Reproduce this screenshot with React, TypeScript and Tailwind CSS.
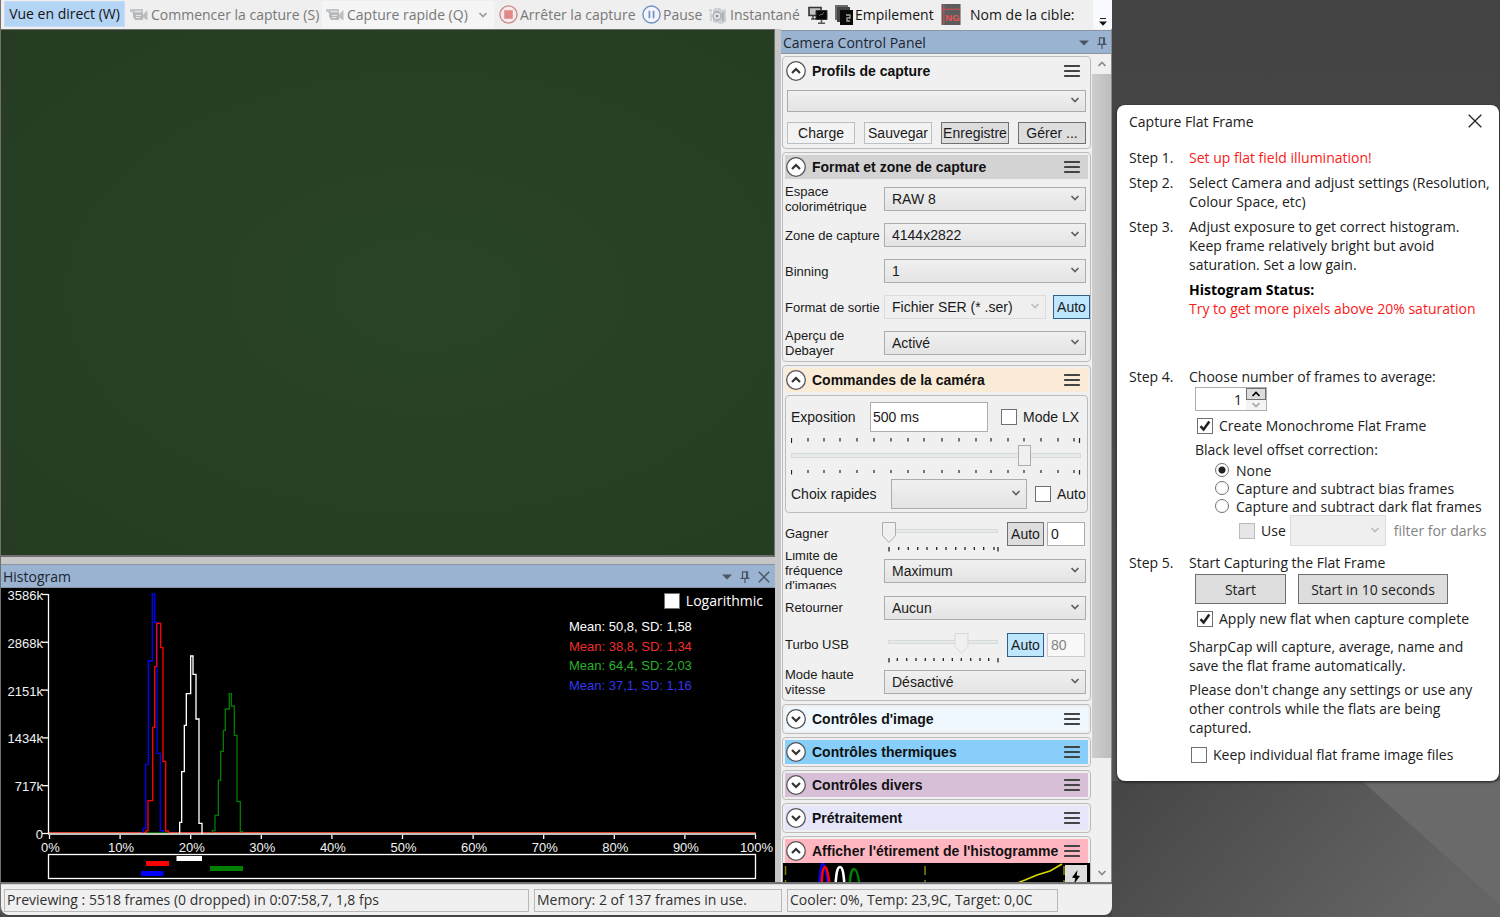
import type { ReactNode } from 'react';
import { useState } from 'react';
import clsx from 'clsx';

const uiFont = "font-['Open_Sans',sans-serif]";
const arial = "font-['Liberation_Sans',sans-serif]";

function Chevron({ className, up = false }: { className?: string; up?: boolean }) {
  return (
    <svg viewBox="0 0 10 6" className={clsx('h-[6px] w-[10px]', className)} fill="none">
      <path d={up ? 'M1.5 5 5 1.5 8.5 5' : 'M1.5 1 5 4.5 8.5 1'} stroke="currentColor" strokeWidth="1.7" />
    </svg>
  );
}

function PinIcon() {
  return (
    <svg viewBox="0 0 10 12" className="h-3 w-[10px]" fill="none" stroke="#4b5563" strokeWidth="1.2">
      <path d="M2.5 7V.8h5V7M.5 7.3h9M5 7.5V12M6.6 1v6" />
    </svg>
  );
}

function TitleBar({ title, closable = false }: { title: string; closable?: boolean }) {
  return (
    <div
      className={clsx(
        'flex h-[24px] shrink-0 items-center border-y border-[#8895a3] bg-[#9ab3d1] pt-[2px] pl-[2px] text-sm leading-5 text-[#1c2530]',
        closable ? 'pr-[5px]' : 'pr-1',
        uiFont,
      )}
    >
      <h2 className="flex-1">{title}</h2>
      <button type="button" aria-label="Menu" className="mr-[8px]">
        <svg viewBox="0 0 10 6" className="h-[6px] w-[10px]">
          <path d="M0 .5h10L5 5.5z" fill="#4b5563" />
        </svg>
      </button>
      <button type="button" aria-label="Pin">
        <PinIcon />
      </button>
      {closable && (
        <button type="button" aria-label="Close" className="ml-[8px]">
          <svg viewBox="0 0 12 12" className="h-3 w-3" stroke="#4b5563" strokeWidth="1.5">
            <path d="M.8.8l10.4 10.4M11.2.8.8 11.2" />
          </svg>
        </button>
      )}
    </div>
  );
}

interface SelectProps {
  label: string;
  value?: string;
  className?: string;
  disabled?: boolean;
}

function Select({ label, value = '', className, disabled }: SelectProps) {
  return (
    <div className={clsx('relative', className)}>
      <select
        aria-label={label}
        disabled={disabled}
        className={clsx(
          'block h-full w-full appearance-none border pl-[7px] text-sm text-[#1a1a1a] opacity-100',
          disabled
            ? 'border-[#dcdcdc] bg-[#efefef]'
            : 'border-[#acacac] bg-linear-to-b from-[#f0f0f0] to-[#e4e4e4]',
        )}
      >
        <option>{value}</option>
      </select>
      <Chevron
        className={clsx(
          'pointer-events-none absolute top-1/2 right-[6px] -translate-y-1',
          disabled ? 'text-[#bdbdbd]' : 'text-[#606060]',
        )}
      />
    </div>
  );
}

interface CheckProps {
  label: string;
  checked?: boolean;
  disabled?: boolean;
  className?: string;
}

function Check({ label, checked = false, disabled, className }: CheckProps) {
  const [on, setOn] = useState(checked);
  return (
    <label className={clsx('flex items-center gap-[6px] whitespace-nowrap', className)}>
      <span className="relative h-4 w-4 shrink-0">
        <input
          type="checkbox"
          checked={on}
          disabled={disabled}
          onChange={() => setOn(!on)}
          className={clsx(
            'block h-4 w-4 appearance-none border',
            disabled ? 'border-[#bcbcbc] bg-[#e6e6e6]' : 'border-[#707070] bg-white',
          )}
        />
        {on && (
          <svg viewBox="0 0 16 16" className="pointer-events-none absolute inset-0" fill="none">
            <path d="M3.5 8.2 6.6 11.6 12.3 3.6" stroke="#212121" strokeWidth="2.5" />
          </svg>
        )}
      </span>
      {label}
    </label>
  );
}

function AutoButton({ active, className }: { active?: boolean; className?: string }) {
  return (
    <button
      type="button"
      className={clsx(
        'h-[24px] w-[37px] shrink-0 border text-sm',
        active ? 'border-[#2c628b] bg-[#bee6fd]' : 'border-[#707070] bg-[#dddddd]',
        className,
      )}
    >
      Auto
    </button>
  );
}

interface SectionProps {
  title: string;
  tint: string;
  open?: boolean;
  children?: ReactNode;
}

function Section({ title, tint, open = false, children }: SectionProps) {
  return (
    <section className={clsx('shrink-0 rounded-[4px] border border-[#bcbcbc] px-[2px] pt-[2px]', !open && 'pb-[2px]')}>
      <header className={clsx('flex h-6 items-center pr-2', tint)}>
        <button type="button" aria-label={title} aria-expanded={open} className="ml-px">
          <svg viewBox="0 0 20 20" className="h-5 w-5" fill="none">
            <circle cx="10" cy="10" r="9.3" fill="#fff" stroke="#555" strokeWidth="1.3" />
            <path d={open ? 'M6 12l4-4 4 4' : 'M6 8l4 4 4-4'} stroke="#333" strokeWidth="2.2" />
          </svg>
        </button>
        <h3 className="ml-[6px] flex-1 text-sm font-bold whitespace-nowrap text-[#111]">{title}</h3>
        <button type="button" aria-label={`Options ${title}`}>
          <svg viewBox="0 0 16 12" className="h-3 w-4" stroke="#444" strokeWidth="2.2" strokeLinecap="round">
            <path d="M1 1h14M1 6h14M1 11h14" />
          </svg>
        </button>
      </header>
      {children}
    </section>
  );
}

function Row({ label, tall, children }: { label: string; tall?: boolean; children: ReactNode }) {
  return (
    <div className={clsx('grid grid-cols-[99px_1fr] items-center pr-[2px]', tall ? 'h-[37px]' : 'h-9')}>
      <div className="flex h-full items-center overflow-hidden text-[13px] leading-[15px]">
        <span className="max-w-[98px]">{label}</span>
      </div>
      {children}
    </div>
  );
}

interface SliderProps {
  label: string;
  position: number;
  value: number;
  ticks: number[];
  disabled?: boolean;
}

function SmallSlider({ label, position, value, ticks, disabled }: SliderProps) {
  return (
    <div className="relative h-[30px] w-[118px] shrink-0">
      <svg viewBox="0 0 118 30" className="h-[30px] w-[118px]">
        <rect x="6.5" y="7.5" width="109" height="3" fill="#e7eaea" stroke="#d6dada" />
        <path
          d={`M${position - 6.5} .5h13v13l-6.5 7-6.5-7z`}
          fill="#f0f0f0"
          stroke={disabled ? '#d9d9d9' : '#acacac'}
        />
        {ticks.map((x, i) => (
          <path
            key={x}
            d={`M${x} 25v${i === 0 || i === ticks.length - 1 ? 4.5 : 3}`}
            stroke="#222"
            strokeWidth="1.3"
          />
        ))}
      </svg>
      <input
        type="range"
        aria-label={label}
        defaultValue={value}
        disabled={disabled}
        className="absolute inset-0 w-full opacity-0"
      />
    </div>
  );
}

const exposureTicks = [0.5, 17, 33, 49, 66, 83, 100, 117, 133, 151, 168, 185, 200, 217, 233, 250, 267, 283, 288.5];
const gainTicks = [7, 16.7, 26.3, 35.7, 45, 54.7, 64, 73.7, 83, 92.3, 101.7, 112, 116];
const usbTicks = [7, 15.3, 24.7, 34, 43.3, 52, 61.3, 70.3, 79.3, 88.7, 98, 106.7, 116];

function ExposureSlider() {
  return (
    <div className="relative mt-[3px] h-[40px]">
      <svg viewBox="0 0 290 40" className="h-[40px] w-[290px]">
        {exposureTicks.map((x, i) => {
          const long = i === 0 || i === exposureTicks.length - 1;
          return (
            <path key={x} d={`M${x} 3v${long ? 5 : 3.5}M${x} 35v${long ? 4.5 : 3}`} stroke="#222" strokeWidth="1.2" />
          );
        })}
        <rect x=".5" y="18.5" width="289" height="4" fill="#e7eaea" stroke="#d6dada" />
        <rect x="227.5" y="10.5" width="12" height="20" fill="#f0f0f0" stroke="#acacac" />
      </svg>
      <input type="range" aria-label="Exposition" defaultValue={80} className="absolute inset-0 w-full opacity-0" />
    </div>
  );
}

function CaptureProfiles() {
  const button = 'h-[22px] flex-1 basis-0 border text-sm leading-5 whitespace-nowrap text-[#1a1a1a]';
  return (
    <div className="px-[2px] pt-[7px] pb-1">
      <Select label="Profil" className="h-[22px]" />
      <div className="mt-[10px] flex gap-[9px]">
        <button type="button" className={clsx(button, 'border-[#b9c0c4] bg-[#f3f3f3]')}>Charge</button>
        <button type="button" className={clsx(button, 'border-[#b9c0c4] bg-[#f3f3f3]')}>Sauvegar</button>
        <button type="button" className={clsx(button, 'border-[#707070] bg-[#dddddd]')}>Enregistre</button>
        <button type="button" className={clsx(button, 'border-[#707070] bg-[#dddddd]')}>Gérer ...</button>
      </div>
    </div>
  );
}

function CameraControls() {
  return (
    <>
      <div className="mt-[3px] mb-[2px] h-[118px] overflow-hidden rounded-[4px] border border-[#bcbcbc] px-[5px] pt-[6px] text-sm">
        <div className="flex h-[30px] items-center">
          <label htmlFor="exposure" className="w-[79px]">Exposition</label>
          <input
            id="exposure"
            defaultValue="500 ms"
            className="h-[30px] w-[118px] border border-[#abadb3] bg-white px-[2px]"
          />
          <Check label="Mode LX" className="ml-[13px]" />
        </div>
        <ExposureSlider />
        <div className="mt-[4px] flex h-[30px] items-center">
          <span className="w-[100px] shrink-0">Choix rapides</span>
          <Select label="Choix rapides" className="h-[30px] w-[136px] shrink-0" />
          <Check label="Auto" className="ml-[8px] shrink-0" />
        </div>
      </div>
      <Row label="Gagner" tall>
        <div className="-ml-[2px] flex h-full items-start pt-[7px]">
          <SmallSlider label="Gagner" position={7} value={0} ticks={gainTicks} />
          <AutoButton className="ml-[7px]" />
          <input
            aria-label="Valeur du gain"
            defaultValue="0"
            className="ml-[3px] h-[24px] w-[38px] border border-[#abadb3] bg-white px-[3px] text-sm"
          />
        </div>
      </Row>
      <Row label="Limite de fréquence d'images" tall>
        <Select label="Limite de fréquence d'images" value="Maximum" className="h-[24px]" />
      </Row>
      <Row label="Retourner" tall>
        <Select label="Retourner" value="Aucun" className="h-[24px]" />
      </Row>
      <Row label="Turbo USB" tall>
        <div className="-ml-[2px] flex h-full items-start pt-[7px]">
          <SmallSlider label="Turbo USB" position={79.5} value={80} ticks={usbTicks} disabled />
          <AutoButton active className="ml-[7px]" />
          <input
            aria-label="Valeur Turbo USB"
            defaultValue="80"
            disabled
            className="ml-[3px] h-[24px] w-[38px] border border-[#c9cbd0] bg-[#f8f8f8] px-[3px] text-sm text-[#838383]"
          />
        </div>
      </Row>
      <Row label="Mode haute vitesse" tall>
        <Select label="Mode haute vitesse" value="Désactivé" className="h-[24px]" />
      </Row>
    </>
  );
}

function StretchPreview() {
  return (
    <div className="-mx-[2px] flex h-[120px] bg-black pr-[2px]">
      <svg viewBox="0 0 282 120" className="h-[120px] w-[282px]" fill="none">
        <path d="M2.5 3v120M142 3v120M281 3v120" stroke="#8a8600" strokeWidth="1.5" strokeDasharray="9 5" />
        <path d="M36 30C37 8 38 1 40 1s4 9 5 29" stroke="#00f" strokeWidth="2.5" />
        <path d="M38 30C39 10 40 4 42 4s4 9 5 26" stroke="red" strokeWidth="2.5" />
        <path d="M52 30c1-20 2-26 5-26s4 8 5 26" stroke="#fff" strokeWidth="2.5" />
        <path d="M66 30c1-16 2-24 5-24s5 8 6 24" stroke="green" strokeWidth="2.5" />
        <path d="M229 22l13-5 12-5 13-4 12-7" stroke="#d8d800" strokeWidth="1.5" />
      </svg>
      <button type="button" aria-label="Auto" className="mt-[2px] flex h-[24px] w-[22px] items-center justify-center bg-[#dddddd]">
        <svg viewBox="0 0 10 14" className="h-[14px] w-[10px]">
          <path d="M6.5 0 1 7.5l3.3.8L3 14l6-8-3.3-.6z" fill="#000" />
        </svg>
      </button>
    </div>
  );
}

function ControlPanel() {
  return (
    <aside className={clsx('flex w-[331px] shrink-0 flex-col border-r border-[#8a8a8a] bg-[#f0f0f0] pt-px text-[#1a1a1a]', arial)}>
      <TitleBar title="Camera Control Panel" />
      <div className="flex min-h-0 flex-1">
        <div className="flex min-w-0 flex-1 flex-col gap-[3px] overflow-hidden pt-[2px] pl-px">
          <Section title="Profils de capture" tint="bg-[#f0f0f0]" open>
            <CaptureProfiles />
          </Section>
          <Section title="Format et zone de capture" tint="bg-[#d3d3d3]" open>
            <div className="pt-[2px]">
              <Row label="Espace colorimétrique">
                <Select label="Espace colorimétrique" value="RAW 8" className="h-[24px]" />
              </Row>
              <Row label="Zone de capture">
                <Select label="Zone de capture" value="4144x2822" className="h-[24px]" />
              </Row>
              <Row label="Binning">
                <Select label="Binning" value="1" className="h-[24px]" />
              </Row>
              <Row label="Format de sortie">
                <div className="-mr-[4px] flex gap-[7px]">
                  <Select label="Format de sortie" value="Fichier SER (* .ser)" className="h-[24px] flex-1" disabled />
                  <AutoButton active />
                </div>
              </Row>
              <Row label="Aperçu de Debayer">
                <Select label="Aperçu de Debayer" value="Activé" className="h-[24px]" />
              </Row>
            </div>
          </Section>
          <Section title="Commandes de la caméra" tint="bg-[#faebd7]" open>
            <CameraControls />
          </Section>
          <Section title="Contrôles d'image" tint="bg-[#f0f8ff]" />
          <Section title="Contrôles thermiques" tint="bg-[#87cefa]" />
          <Section title="Contrôles divers" tint="bg-[#d8bfd8]" />
          <Section title="Prétraitement" tint="bg-[#e6e6fa]" />
          <Section title="Afficher l'étirement de l'histogramme" tint="bg-[#ffb6c1]" open>
            <StretchPreview />
          </Section>
        </div>
        <div className="ml-px flex w-[19px] flex-col items-center text-[#8a8a8a]">
          <div className="flex h-[20px] items-center">
            <Chevron up />
          </div>
          <div className="w-full flex-1 bg-linear-to-r from-[#cdcdcd] to-[#bdbdbd]" />
          <div className="flex h-[124px] items-end pb-[6px]">
            <Chevron />
          </div>
        </div>
      </div>
    </aside>
  );
}

const stats = [
  { text: 'Mean: 50,8, SD: 1,58', fill: '#ffffff' },
  { text: 'Mean: 38,8, SD: 1,34', fill: '#ee2e2e' },
  { text: 'Mean: 64,4, SD: 2,03', fill: '#2bb02b' },
  { text: 'Mean: 37,1, SD: 1,16', fill: '#3535ee' },
];

const yLabels = ['3586k', '2868k', '2151k', '1434k', '717k', '0'];
const xLabels = ['0%', '10%', '20%', '30%', '40%', '50%', '60%', '70%', '80%', '90%', '100%'];

function HistogramChart() {
  return (
    <svg viewBox="1 0 774 294" className={clsx('h-full w-full', arial)} fontSize="13" fill="#f2f2f2">
      {/* traces are plotted on a three times finer grid */}
      <g transform="translate(0 -38) scale(.33333)" fill="none" strokeWidth="4">
        <path d="M147 848H2267" stroke="#d8442c" />
        <path
          d="M429 848V835h8V643h8V333h12V132h7V217h7V610h10V842h9v6"
          stroke="#0000ff"
        />
        <path
          d="M438 848v-6h6V752h14V532h6V350h6V220h12v73h7V634h8V843h8v5"
          stroke="#ff0000"
        />
        <path d="M637 848v-6h8V796h10V691h7V604h8V541h6V477h12V431h6v37h9v88h8V755h10v90h8" stroke="#007a00" />
        <path d="M441 848h62" stroke="#006400" />
        <path d="M539 850V817h6V665h8V526h6V431h13V318h7v55h9V507h9V820h9v32" stroke="#ffffff" />
      </g>
      <g stroke="#ffffff" strokeWidth="1.3" fill="none">
        <path d="M48.5 6v240" />
        <path d="M48 246h708" strokeWidth="1.6" />
        {yLabels.map((label, i) => (
          <path key={label} d={`M42 ${6.5 + i * 47.8}h6`} />
        ))}
        {xLabels.map((label, i) => (
          <path key={label} d={`M${49.5 + i * 70.6} 247v4`} />
        ))}
        <rect x="48.5" y="266.5" width="707" height="24" />
      </g>
      {yLabels.map((label, i) => (
        <text key={label} x="43" y={12 + i * 47.8} textAnchor="end">
          {label}
        </text>
      ))}
      {xLabels.map((label, i) => (
        <text key={label} x={50.5 + i * 70.6} y="264" textAnchor="middle">
          {label}
        </text>
      ))}
      {stats.map(({ text, fill }, i) => (
        <text key={text} x="569" y={43 + i * 19.7} fill={fill}>
          {text}
        </text>
      ))}
      <rect x="176.5" y="268" width="25.5" height="5" fill="#fff" />
      <rect x="146" y="273" width="23" height="5" fill="#f00" />
      <rect x="210" y="278" width="33" height="5" fill="#008000" />
      <rect x="141" y="283" width="22.5" height="5" fill="#00f" />
    </svg>
  );
}

function CamcorderIcon() {
  return (
    <svg viewBox="0 0 18 14" className="h-[14px] w-[18px] shrink-0">
      <path d="M0 1h3v3H0z" fill="#c6c8ca" />
      <path d="M2 1h11v4H2z" fill="#c3c6c8" />
      <path d="M3 5h10v7H5L3 9z" fill="#b6b9bc" />
      <path d="M5 3h6v1H5zM6 7h5v1H6zM6 9h4v1H6z" fill="#e6e6e6" />
      <path d="M13 6.5 17.5 2v10.500L13 9.5z" fill="#bcbfc2" />
    </svg>
  );
}

function Toolbar() {
  const item = 'flex items-center whitespace-nowrap';
  return (
    <header className={clsx('flex h-[29px] shrink-0 items-center bg-[#efefef] pl-[3px] text-sm text-[#787878]', uiFont)}>
      <button type="button" className={clsx(item, 'mb-px h-[26px] w-[121px] justify-center border border-[#c5dcf2] bg-[#b3d4f4] text-[#151515]')}>
        Vue en direct (W)
      </button>
      <button type="button" className={clsx(item, 'ml-[5px] w-[192px] gap-[3px]')}>
        <CamcorderIcon />
        Commencer la capture (S)
      </button>
      <div className="flex h-[28px] w-[172px] items-center bg-[#f5f5f5] pr-[6px] pl-1">
        <button type="button" className={clsx(item, 'flex-1 gap-[3px]')}>
          <CamcorderIcon />
          Capture rapide (Q)
        </button>
        <button type="button" aria-label="Plus d'options de capture">
          <Chevron className="text-[#9a9a9a]" />
        </button>
      </div>
      <button type="button" className={clsx(item, 'ml-[5px] w-[143px] gap-[2px]')}>
        <svg viewBox="0 0 20 20" className="h-[19px] w-[19px] shrink-0">
          <circle cx="10" cy="10" r="9" fill="#f6eaea" stroke="#c9898b" strokeWidth="1.4" />
          <path d="M5.5 5.5h9v9h-9z" fill="#e2878a" />
        </svg>
        Arrêter la capture
      </button>
      <button type="button" className={clsx(item, 'w-[67px] gap-[2px]')}>
        <svg viewBox="0 0 20 20" className="h-[19px] w-[19px] shrink-0">
          <circle cx="10" cy="10" r="9" fill="#f4f6fb" stroke="#7390c4" strokeWidth="1.5" />
          <path d="M7.8 6v8M12.2 6v8" stroke="#7390c4" strokeWidth="1.8" />
        </svg>
        Pause
      </button>
      <button type="button" className={clsx(item, 'w-[99px] gap-[3px]')}>
        <svg viewBox="0 0 18 18" className="h-[18px] w-[18px] shrink-0">
          <path d="M0 3h3v3H0zM1 7h2v8H1z" fill="#d0d2d4" />
          <path d="M4 4l2-2h5l2 2 4-1v13l-5 2-8-2z" fill="#cdcfd0" />
          <circle cx="8" cy="10" r="4" fill="#e9e9e9" stroke="#a4a8ac" strokeWidth="1.3" />
          <circle cx="8" cy="10" r="1.6" fill="#8d9baa" />
          <path d="M14 6v9" stroke="#8f8f8f" />
        </svg>
        Instantané
      </button>
      <button type="button" aria-label="Écrans" className="w-[27px] shrink-0">
        <svg viewBox="0 0 20 20" className="h-[20px] w-[20px]" fill="none">
          <path d="M1 2.5h12v8H1z" fill="#c4c4c4" stroke="#333" strokeWidth="1.6" />
          <path d="M5 11v3h3M3 14h5" stroke="#444" strokeWidth="1.5" />
          <path d="M8 5.5h11v9H8z" fill="#080808" stroke="#333" />
          <path d="M11 11l2-2 1 1 2-3" stroke="#777" strokeWidth=".8" />
          <path d="M13.5 15v3M10 18.3h7" stroke="#555" strokeWidth="1.5" />
        </svg>
      </button>
      <button type="button" className={clsx(item, 'w-[106px] shrink-0 gap-px text-[#151515]')}>
        <svg viewBox="0 0 19 20" className="h-[20px] w-[19px] shrink-0">
          <path d="M0 0h13v15H0z" fill="#6c6c6c" />
          <path d="M2 2h13v15H2z" fill="#454545" />
          <path d="M5 5h13v15H5z" fill="#0a0a0a" />
          <path d="M11 10h4v3h-3v3h3" fill="none" stroke="#a5a5a5" strokeWidth="1.3" />
        </svg>
        Empilement
      </button>
      <button type="button" aria-label="Annotation" className="mr-[9px] shrink-0">
        <svg viewBox="0 0 20 22" className="h-[21px] w-[20px]">
          <path d="M0 0h20v22H0z" fill="#5c5c5c" />
          <path d="M2.5 0v22M0 5.5h20" stroke="#dc4f52" strokeWidth="1" />
          <text x="4" y="18" fontSize="10" fill="#ef5558" fontWeight="700" className={arial}>
            NG
          </text>
        </svg>
      </button>
      <span className="flex-1 whitespace-nowrap text-[#151515]">Nom de la cible:</span>
      <button type="button" aria-label="Plus d'outils" className="flex h-full w-[19px] items-end justify-center bg-[#f8fafd] pb-[3px]">
        <svg viewBox="0 0 8 8" className="h-2 w-2">
          <path d="M1 .5h6" stroke="#222" />
          <path d="M0 3.5h8L4 7.8z" fill="#111" />
        </svg>
      </button>
    </header>
  );
}

function StatusBar() {
  const cell = 'flex h-[23px] items-center border border-[#b8b8b8] px-[2px] whitespace-nowrap';
  return (
    <footer className={clsx('flex h-[31px] shrink-0 items-center gap-[5px] rounded-b-lg border-t border-[#d8d8d8] bg-[#f0f0f0] pr-[54px] pl-[3px] text-sm text-[#303030]', uiFont)}>
      <div className={clsx(cell, 'flex-1')}>Previewing : 5518 frames (0 dropped) in 0:07:58,7, 1,8 fps</div>
      <div className={clsx(cell, 'w-[248px]')}>Memory: 2 of 137 frames in use.</div>
      <div className={clsx(cell, 'w-[271px]')}>Cooler: 0%, Temp: 23,9C, Target: 0,0C</div>
    </footer>
  );
}

function Radio({ label, checked }: { label: string; checked?: boolean }) {
  return (
    <label className="flex h-[18px] items-center gap-[7px]">
      <input
        type="radio"
        name="offset"
        defaultChecked={checked}
        className="h-[14px] w-[14px] shrink-0 appearance-none rounded-full border border-[#707070] bg-white checked:bg-[radial-gradient(circle,#212121_3px,#fff_4px)]"
      />
      {label}
    </label>
  );
}

function Step({ name, className, children }: { name: string; className?: string; children: ReactNode }) {
  return (
    <div className={clsx('grid grid-cols-[60px_1fr]', className)}>
      <span>{name}</span>
      <div>{children}</div>
    </div>
  );
}

function FlatFrameDialog() {
  return (
    <section
      role="dialog"
      aria-label="Capture Flat Frame"
      className={clsx('relative mt-[105px] mr-px ml-[5px] rounded-lg bg-white pb-[17px] pl-3 text-sm leading-[19px] text-[#202020] shadow-[0_1px_3px_#1a1a1a]', uiFont)}
    >
      <header className="flex h-[43px] items-start justify-between pt-[7px] pr-[17px]">
        <h2>Capture Flat Frame</h2>
        <button type="button" aria-label="Close" className="mt-[2px]">
          <svg viewBox="0 0 14 14" className="h-[14px] w-[14px]" stroke="#222" strokeWidth="1.3">
            <path d="M.7.7l12.6 12.6M13.3.7.7 13.3" />
          </svg>
        </button>
      </header>
      <Step name="Step 1.">
        <span className="text-[#fb1a1a]">Set up flat field illumination!</span>
      </Step>
      <Step name="Step 2." className="mt-[6px]">
        Select Camera and adjust settings (Resolution,
        <br />
        Colour Space, etc)
      </Step>
      <Step name="Step 3." className="mt-[6px]">
        Adjust exposure to get correct histogram.
        <br />
        Keep frame relatively bright but avoid
        <br />
        saturation. Set a low gain.
        <p className="mt-[6px] font-bold text-black">Histogram Status:</p>
        <p className="text-[#fb1a1a]">Try to get more pixels above 20% saturation</p>
      </Step>
      <Step name="Step 4." className="mt-[49px]">
        <label htmlFor="frames">Choose number of frames to average:</label>
        <div className="pl-[6px]">
          <div className="mt-px flex h-[24px] w-[72px] border border-[#abadb3]">
            <input id="frames" defaultValue="1" className="min-w-0 flex-1 pr-1 text-right" />
            <div className="flex w-[20px] flex-col">
              <button type="button" aria-label="Increase" className="flex flex-1 items-center justify-center border border-[#707070] bg-[#dddddd]">
                <Chevron up className="text-black" />
              </button>
              <button type="button" aria-label="Decrease" className="flex flex-1 items-center justify-center bg-[#f4f4f4]">
                <Chevron className="text-[#a5a5a5]" />
              </button>
            </div>
          </div>
          <Check label="Create Monochrome Flat Frame" checked className="mt-[5px] ml-[2px]" />
          <p className="mt-[5px]">Black level offset correction:</p>
          <div className="mt-[2px] pl-[20px]">
            <Radio label="None" checked />
            <Radio label="Capture and subtract bias frames" />
            <Radio label="Capture and subtract dark flat frames" />
          </div>
          <div className="flex h-[31px] items-center pl-[44px]">
            <Check label="Use" disabled />
            <Select label="Filter" disabled className="ml-1 h-[31px] w-[96px]" />
            <span className="ml-[8px] whitespace-nowrap text-[#838383]">filter for darks</span>
          </div>
        </div>
      </Step>
      <Step name="Step 5." className="mt-[7px]">
        <p>Start Capturing the Flat Frame</p>
        <div className="mt-[2px] flex gap-3 pl-[6px]">
          <button type="button" className="h-[30px] w-[91px] border border-[#707070] bg-[#dddddd]">Start</button>
          <button type="button" className="h-[30px] w-[150px] border border-[#707070] bg-[#dddddd]">Start in 10 seconds</button>
        </div>
        <Check label="Apply new flat when capture complete" checked className="mt-[5px] ml-[8px]" />
        <p className="mt-[9px]">
          SharpCap will capture, average, name and
          <br />
          save the flat frame automatically.
        </p>
        <p className="mt-[5px]">
          Please don't change any settings or use any
          <br />
          other controls while the flats are being
          <br />
          captured.
        </p>
        <Check label="Keep individual flat frame image files" className="mt-[8px] ml-[2px]" />
      </Step>
    </section>
  );
}

export default function App() {
  return (
    <div className="flex h-screen overflow-hidden bg-[#444]">
      <div className="flex min-w-0 flex-1 flex-col rounded-b-lg border-l border-[#707070] pb-[2px]">
        <Toolbar />
        <div className="flex min-h-0 flex-1 border-b-2 border-[#757575] bg-[#c6c6c6]">
          <div className="mr-[6px] flex min-w-0 flex-1 flex-col">
            <main
              aria-label="Preview"
              className="min-h-0 flex-1 border-t border-r border-b-2 border-[#6e6e6e] bg-[radial-gradient(ellipse_at_55%_50%,#2a4427,#253c23)]"
            />
            <section className="mt-[7px] flex h-[318px] shrink-0 flex-col bg-black">
              <TitleBar title="Histogram" closable />
              <div className="relative min-h-0 flex-1">
                <HistogramChart />
                <Check
                  label="Logarithmic"
                  className={clsx('absolute top-[3px] right-[12px] text-sm text-white', uiFont)}
                />
              </div>
            </section>
          </div>
          <ControlPanel />
        </div>
        <StatusBar />
      </div>
      <div className="relative w-[388px] shrink-0 bg-linear-to-b from-[#434343] via-[#4a4a4a] to-[#595959]">
        <svg viewBox="0 0 388 136" preserveAspectRatio="none" className="absolute bottom-0 left-0 h-[136px] w-full">
          <defs>
            <linearGradient id="floor" x1="0" x2="1" y1="0" y2=".3">
              <stop offset="0" stopColor="#454545" />
              <stop offset="1" stopColor="#646464" />
            </linearGradient>
          </defs>
          <path d="M0 0h388v136H0z" fill="url(#floor)" />
          <path d="M250 0h138v124z" fill="#6a6a6a" />
        </svg>
        <FlatFrameDialog />
      </div>
    </div>
  );
}
